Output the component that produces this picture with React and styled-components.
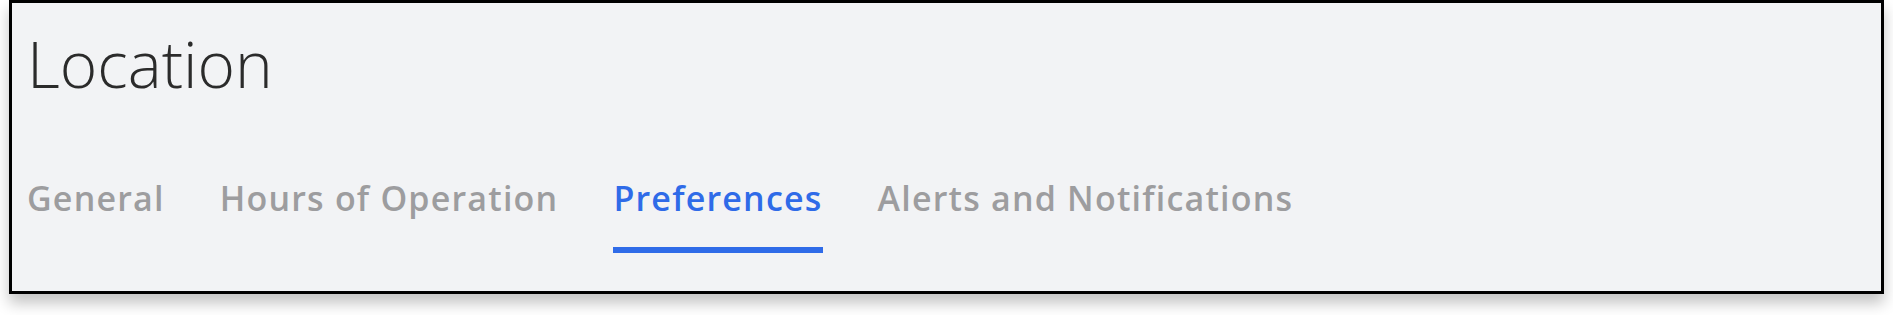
import React, { useState } from 'react'
import styled, { createGlobalStyle } from 'styled-components'

const GlobalStyle = createGlobalStyle`
  html, body {
    margin: 0;
    padding: 0;
    background: #ffffff;
    font-family: 'Open Sans', 'Noto Sans', sans-serif;
  }
`

const Page = styled.div`
  padding-left: 9px;
  width: 1893px;
  height: 315px;
  box-sizing: border-box;
`

const Card = styled.section`
  width: 1875px;
  height: 294px;
  box-sizing: border-box;
  border: 3px solid #000;
  background: #f2f3f5;
  box-shadow: 0 9px 14px rgba(0, 0, 0, 0.24);
  padding: 29px 14px 0 15px;
  display: flex;
  flex-direction: column;
`

const Title = styled.h1`
  margin: 0;
  font-size: 64px;
  line-height: 64px;
  font-weight: 300;
  color: #2b2b2b;
`

const Tabs = styled.nav`
  display: flex;
  gap: 55px;
  margin-top: 85px;
`

const Tab = styled.button`
  appearance: none;
  background: none;
  border: 0;
  border-bottom: 6px solid ${p => (p.$active ? '#2f6be8' : 'transparent')};
  padding: 0 0 32px 0;
  margin: 0;
  font-family: inherit;
  font-size: 34px;
  line-height: 34px;
  font-weight: 600;
  letter-spacing: 1.2px;
  color: ${p => (p.$active ? '#2f6be8' : '#9d9d9f')};
  cursor: pointer;
`

const tabs = ['General', 'Hours of Operation', 'Preferences', 'Alerts and Notifications']

const App = () => {
  const [active, setActive] = useState('Preferences')
  return (
    <>
      <GlobalStyle />
      <Page>
        <Card>
          <Title>Location</Title>
          <Tabs>
            {tabs.map(tab =>
              <Tab key={tab} $active={tab === active} onClick={() => setActive(tab)}>
                {tab}
              </Tab>
            )}
          </Tabs>
        </Card>
      </Page>
    </>
  )
}

export default App
